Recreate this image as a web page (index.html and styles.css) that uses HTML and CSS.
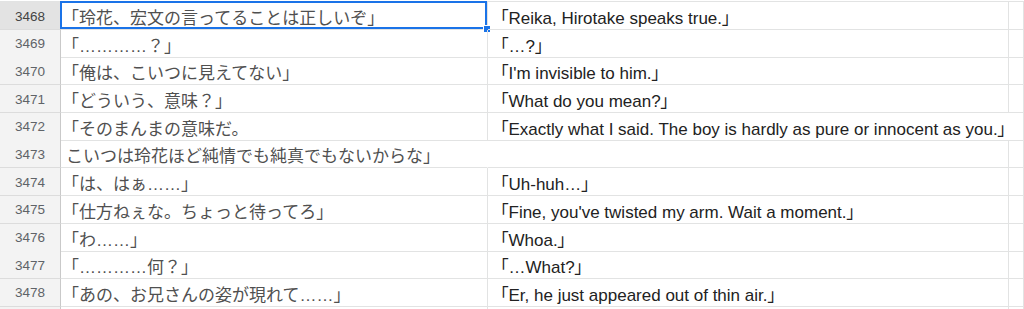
FILE: index.html
```html
<!DOCTYPE html>
<html lang="ja">
<head>
<meta charset="utf-8">
<title>Sheet</title>
<link rel="stylesheet" href="styles.css">
</head>
<body>
<div class="sheet">
  <div class="row">
    <div class="hdr hdr-sel">3468</div>
    <div class="cell ja sel">「玲花、宏文の言ってることは正しいぞ」<span class="selbox"></span></div>
    <div class="cell en">「Reika, Hirotake speaks true.」</div>
    <div class="cell"></div>
  </div>
  <div class="row">
    <div class="hdr">3469</div>
    <div class="cell ja">「…………？」</div>
    <div class="cell en">「…?」</div>
    <div class="cell"></div>
  </div>
  <div class="row">
    <div class="hdr">3470</div>
    <div class="cell ja">「俺は、こいつに見えてない」</div>
    <div class="cell en">「I'm invisible to him.」</div>
    <div class="cell"></div>
  </div>
  <div class="row">
    <div class="hdr">3471</div>
    <div class="cell ja">「どういう、意味？」</div>
    <div class="cell en">「What do you mean?」</div>
    <div class="cell"></div>
  </div>
  <div class="row">
    <div class="hdr">3472</div>
    <div class="cell ja">「そのまんまの意味だ。</div>
    <div class="cell en spill">「Exactly what I said. The boy is hardly as pure or innocent as you.」</div>
    <div class="cell"></div>
  </div>
  <div class="row">
    <div class="hdr">3473</div>
    <div class="cell ja spill nolead">こいつは玲花ほど純情でも純真でもないからな」</div>
    <div class="cell en"></div>
    <div class="cell"></div>
  </div>
  <div class="row">
    <div class="hdr">3474</div>
    <div class="cell ja">「は、はぁ……」</div>
    <div class="cell en">「Uh-huh…」</div>
    <div class="cell"></div>
  </div>
  <div class="row">
    <div class="hdr">3475</div>
    <div class="cell ja">「仕方ねぇな。ちょっと待ってろ」</div>
    <div class="cell en">「Fine, you've twisted my arm. Wait a moment.」</div>
    <div class="cell"></div>
  </div>
  <div class="row">
    <div class="hdr">3476</div>
    <div class="cell ja">「わ……」</div>
    <div class="cell en">「Whoa.」</div>
    <div class="cell"></div>
  </div>
  <div class="row">
    <div class="hdr">3477</div>
    <div class="cell ja">「…………何？」</div>
    <div class="cell en">「…What?」</div>
    <div class="cell"></div>
  </div>
  <div class="row">
    <div class="hdr">3478</div>
    <div class="cell ja">「あの、お兄さんの姿が現れて……」</div>
    <div class="cell en">「Er, he just appeared out of thin air.」</div>
    <div class="cell"></div>
  </div>
  <div class="row">
    <div class="hdr"></div>
    <div class="cell ja"></div>
    <div class="cell en"></div>
    <div class="cell"></div>
  </div>
</div>
</body>
</html>
```
FILE: styles.css
```css
html, body {
  margin: 0;
  padding: 0;
  background: #ffffff;
  overflow: hidden;
}

.sheet {
  margin-top: 1px;
  border-top: 1px solid #e2e3e3;
  width: 1024px;
}

.row {
  display: grid;
  grid-template-columns: 61px 427px 521px 1fr;
  height: 27.7px;
}

.hdr,
.cell {
  box-sizing: border-box;
  border-right: 1px solid #e2e3e3;
  border-bottom: 1px solid #e2e3e3;
  display: flex;
  align-items: center;
  white-space: nowrap;
  min-width: 0;
}

.hdr {
  background: #f3f3f3;
  border-right-color: #c9c9c9;
  border-bottom-color: #dcdcdc;
  justify-content: center;
  font-family: "Liberation Sans", Arial, sans-serif;
  font-size: 13.5px;
  color: #5f6368;
  padding-top: 1px;
}

.hdr-sel {
  background: #e3e3e3;
  color: #444;
}

.cell {
  position: relative;
  overflow: visible;
  padding-top: 2px;
}

.ja {
  font-family: "Liberation Sans", "Noto Sans CJK JP", "Noto Sans CJK SC", sans-serif;
  font-size: 17px;
  color: #505050;
  padding-left: 1px;
}

.ja.nolead {
  padding-left: 5px;
}

.en {
  font-family: "Liberation Sans", Arial, "Noto Sans CJK JP", sans-serif;
  font-size: 17px;
  color: #222;
  padding-left: 12px;
  font-feature-settings: "palt";
}

.spill {
  border-right-color: transparent;
}

.selbox {
  position: absolute;
  left: -1px;
  top: -1px;
  right: 0;
  bottom: 0;
  border: 2px solid #1a73e8;
  pointer-events: none;
}

.selbox::after {
  content: "";
  position: absolute;
  right: -6px;
  bottom: -6px;
  width: 6px;
  height: 6px;
  background: #1a73e8;
  border: 1px solid #ffffff;
}
```
